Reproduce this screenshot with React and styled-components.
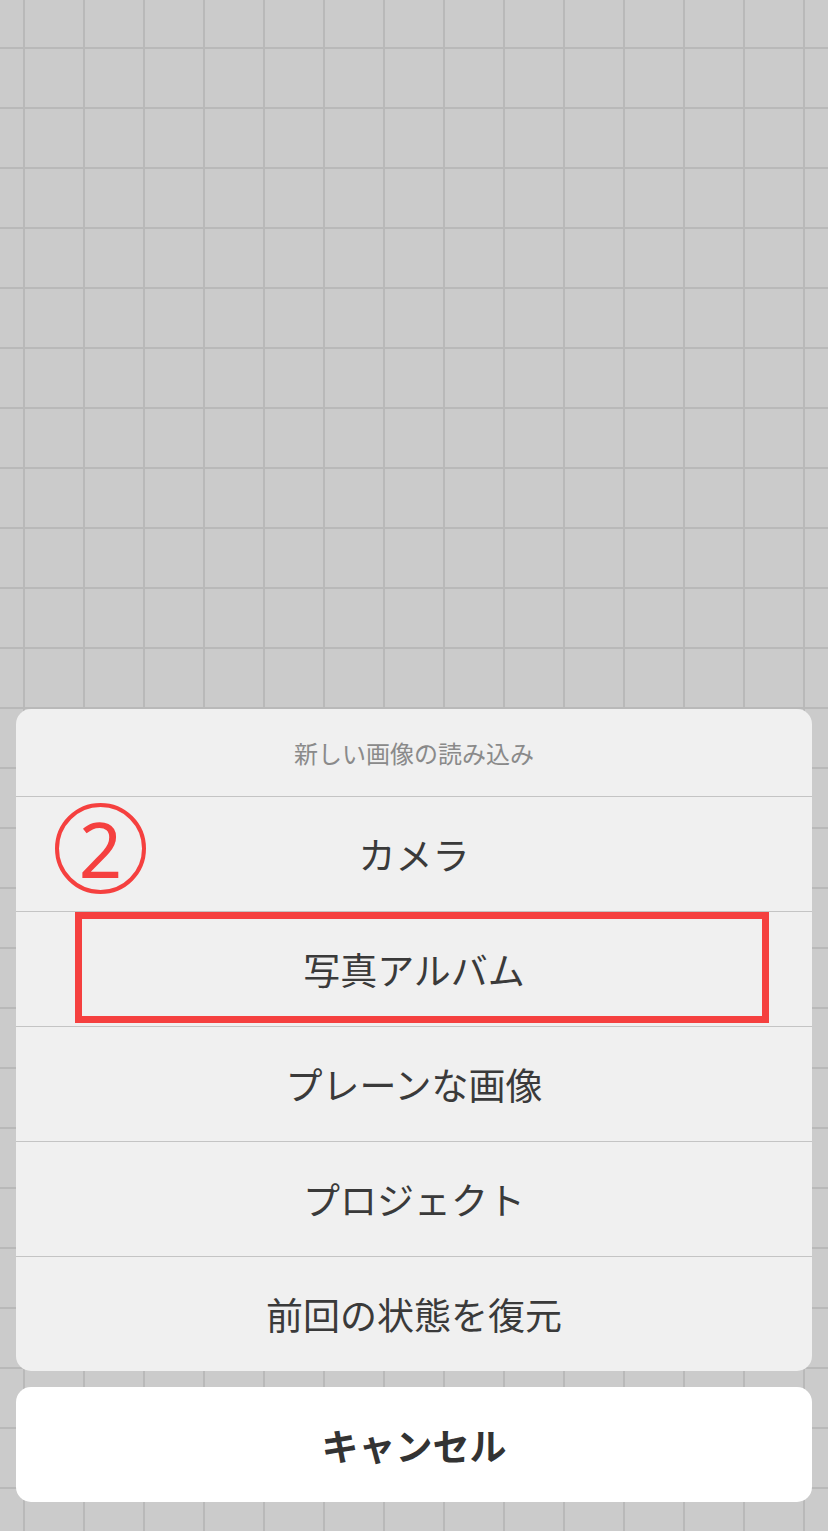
import React from "react";
import styled, { createGlobalStyle } from "styled-components";

const OPTIONS = ["カメラ", "写真アルバム", "プレーンな画像", "プロジェクト", "前回の状態を復元"];

const GlobalStyle = createGlobalStyle`
  html, body {
    margin: 0;
    padding: 0;
  }
  body {
    background-color: #cbcbcb;
    background-image:
      linear-gradient(to right, #b9b9b9 2px, transparent 2px),
      linear-gradient(to bottom, #b9b9b9 2px, transparent 2px);
    background-size: 60px 60px;
    background-position: 23px 47px;
    font-family: "Noto Sans CJK JP", "Noto Sans", sans-serif;
  }
`;

function App() {
  return (
    <>
      <GlobalStyle />
      <Screen>
        <Sheet>
          <SheetTitle>新しい画像の読み込み</SheetTitle>
          {OPTIONS.map((label) => (
            <Option key={label}>{label}</Option>
          ))}
          {/* annotation overlay from the tutorial */}
          <StepBadge>2</StepBadge>
          <Highlight />
        </Sheet>
        <CancelButton>キャンセル</CancelButton>
      </Screen>
    </>
  );
}

const Screen = styled.div`
  min-height: 1531px;
  box-sizing: border-box;
  display: flex;
  flex-direction: column;
  justify-content: flex-end;
  gap: 16px;
  padding: 0 16px 29px;
`;

const Sheet = styled.div`
  position: relative;
  background: #f0f0f0;
  border-radius: 15px;
`;

const SheetTitle = styled.div`
  height: 87px;
  display: flex;
  align-items: center;
  justify-content: center;
  font-size: 24px;
  color: #8a8a8a;
`;

const Option = styled.div`
  height: 114px;
  border-top: 1px solid #c4c4c4;
  display: flex;
  align-items: center;
  justify-content: center;
  font-size: 37px;
  color: #3a3a3a;
`;

const CancelButton = styled.div`
  height: 115px;
  background: #fff;
  border-radius: 15px;
  display: flex;
  align-items: center;
  justify-content: center;
  font-size: 37px;
  font-weight: 700;
  color: #333;
`;

const StepBadge = styled.div`
  position: absolute;
  left: 39px;
  top: 94px;
  width: 91px;
  height: 91px;
  box-sizing: border-box;
  border: 4px solid #f5403f;
  border-radius: 50%;
  display: flex;
  align-items: center;
  justify-content: center;
  font-family: "Noto Sans", sans-serif;
  font-size: 76px;
  line-height: 1;
  color: #f5403f;
`;

const Highlight = styled.div`
  position: absolute;
  left: 59px;
  top: 203px;
  width: 694px;
  height: 111px;
  box-sizing: border-box;
  border: 7px solid #f5403f;
`;

export default App;
